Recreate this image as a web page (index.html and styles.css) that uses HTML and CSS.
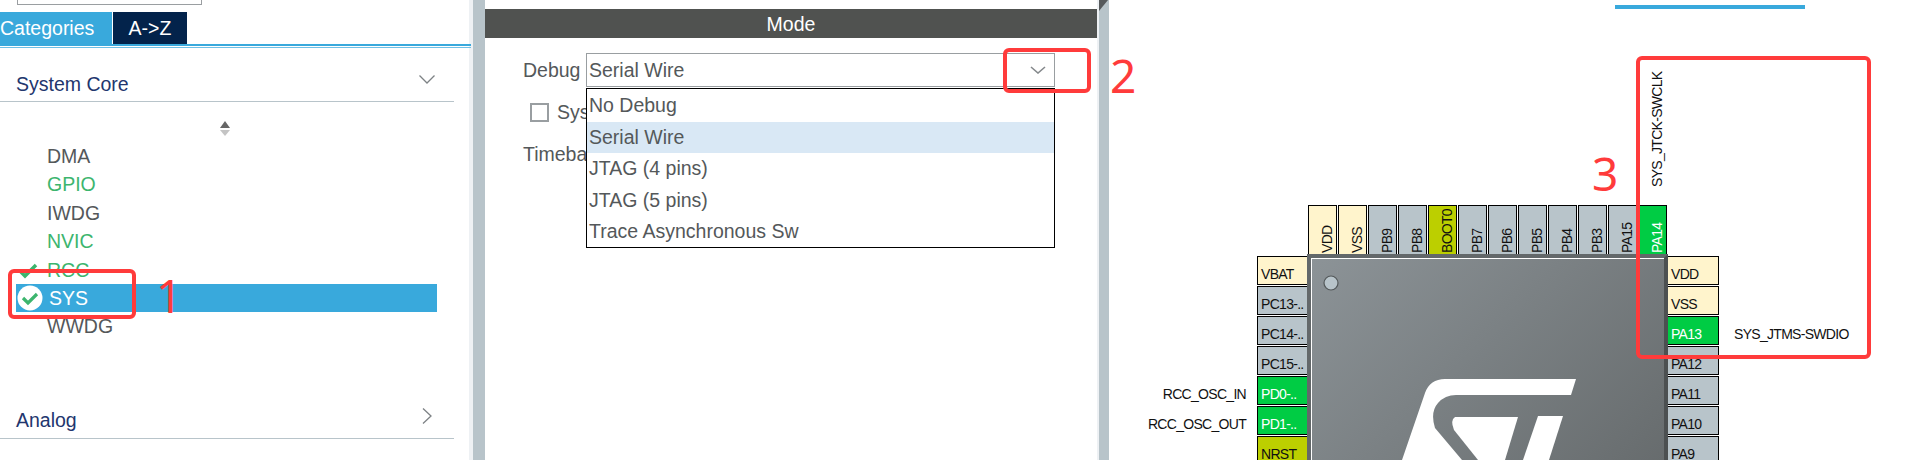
FILE: index.html
```html
<!DOCTYPE html>
<html lang="en">
<head>
<meta charset="utf-8">
<title>Pinout</title>
<link rel="stylesheet" href="styles.css">
</head>
<body>
<div class="app">
  <aside class="side">
    <div class="search"></div>
    <div class="tabs">
      <div class="tab tab-on">Categories</div>
      <div class="tab tab-off">A-&gt;Z</div>
    </div>
    <div class="tab-line"></div>
    <div class="group group-first">
      <span>System Core</span>
      <svg class="chev-down" width="16" height="9" viewBox="0 0 16 9"><polyline points="0.5,0.5 8,8 15.5,0.5" fill="none" stroke="#7d8285" stroke-width="1.3"/></svg>
    </div>
    <svg class="sort" width="12" height="16" viewBox="0 0 12 16"><polygon points="6,0 11,7 1,7" fill="#666"/><polygon points="1,9 11,9 6,15" fill="#c4c4c4"/></svg>
    <ul class="list">
      <li>DMA</li>
      <li class="ok">GPIO</li>
      <li>IWDG</li>
      <li class="ok">NVIC</li>
      <li class="ok">
        <svg class="tick" width="20" height="16" viewBox="0 0 20 16"><polyline points="2,8 7,13 18,2" fill="none" stroke="#3cb56e" stroke-width="3.5"/></svg>
        RCC
      </li>
      <li class="sel">
        <svg class="tick-round" width="26" height="26" viewBox="0 0 26 26"><circle cx="13" cy="13" r="12.5" fill="#fff"/><polyline points="6,13 11,18 20,9" fill="none" stroke="#3cb56e" stroke-width="3.2"/></svg>
        SYS
      </li>
      <li>WWDG</li>
    </ul>
    <div class="group group-next">
      <span>Analog</span>
      <svg class="chev-right" width="10" height="16" viewBox="0 0 10 16"><polyline points="1,0.5 9,8 1,15.5" fill="none" stroke="#7d8285" stroke-width="1.3"/></svg>
    </div>
  </aside>
  <div class="strip"></div>

  <section class="mode">
    <h2 class="mode-title">Mode</h2>
    <div class="row row-debug">
      <label class="label-debug">Debug</label>
      <div class="select">
        <span>Serial Wire</span>
        <svg class="chev-select" width="16" height="8" viewBox="0 0 16 8"><polyline points="1,1 8,7 15,1" fill="none" stroke="#85898c" stroke-width="1.6"/></svg>
        <ul class="menu">
          <li>No Debug</li>
          <li class="menu-on">Serial Wire</li>
          <li>JTAG (4 pins)</li>
          <li>JTAG (5 pins)</li>
          <li>Trace Asynchronous Sw</li>
        </ul>
      </div>
    </div>
    <div class="row row-check"><span class="check"></span><span>Sys</span></div>
    <div class="row row-time"><span>Timeba</span></div>
  </section>
  <div class="hair"></div>
  <div class="strip strip-corner">
    <svg class="corner" width="10" height="11" viewBox="0 0 10 11"><polygon points="0,0 9,0 0,11" fill="#565a5c"/></svg>
  </div>

  <section class="view">
    <div class="view-tab"></div>
    <div class="package">
      <div class="pins-top">
        <div class="pin v pw">VDD</div>
        <div class="pin v pw">VSS</div>
        <div class="pin v pg">PB9</div>
        <div class="pin v pg">PB8</div>
        <div class="pin v po">BOOT0</div>
        <div class="pin v pg">PB7</div>
        <div class="pin v pg">PB6</div>
        <div class="pin v pg">PB5</div>
        <div class="pin v pg">PB4</div>
        <div class="pin v pg">PB3</div>
        <div class="pin v pg">PA15</div>
        <div class="pin v pn">PA14<span class="sig sig-v">SYS_JTCK-SWCLK</span></div>
      </div>
      <div class="pins-left">
        <div class="pin h pw">VBAT</div>
        <div class="pin h pg">PC13-..</div>
        <div class="pin h pg">PC14-..</div>
        <div class="pin h pg">PC15-..</div>
        <div class="pin h pn">PD0-..<span class="sig sig-l">RCC_OSC_IN</span></div>
        <div class="pin h pn">PD1-..<span class="sig sig-l">RCC_OSC_OUT</span></div>
        <div class="pin h po">NRST</div>
      </div>
      <div class="chip">
        <svg class="chip-art" width="353" height="400" viewBox="1311 258 353 400">
          <circle cx="1331" cy="283" r="7" fill="#b8c4ca" stroke="#53585a" stroke-width="1.2"/>
          <path d="M1402 460 L1425 393 Q1430 379 1445 379 L1576 379 L1571 395 L1456 395 Q1445 395 1438 403 Q1430 412 1435 428 L1462 460 Z" fill="#fff"/>
          <path d="M1455 417 L1518 417 L1505 460 L1478 460 L1454 430 Q1450 420 1455 417 Z" fill="#fff"/>
          <path d="M1538 416 L1563 416 L1549 460 L1523 460 Z" fill="#fff"/>
        </svg>
      </div>
      <div class="pins-right">
        <div class="pin h pw">VDD</div>
        <div class="pin h pw">VSS</div>
        <div class="pin h pn">PA13<span class="sig sig-r">SYS_JTMS-SWDIO</span></div>
        <div class="pin h pg">PA12</div>
        <div class="pin h pg">PA11</div>
        <div class="pin h pg">PA10</div>
        <div class="pin h pg">PA9</div>
      </div>
    </div>
  </section>

  <div class="mark mark-1"></div>
  <div class="mark mark-2"></div>
  <div class="mark mark-3"></div>
  <div class="num num-1">1</div>
  <div class="num num-2">2</div>
  <div class="num num-3">3</div>
</div>
</body>
</html>
```
FILE: styles.css
```css
* { box-sizing: border-box; }
html, body { margin: 0; padding: 0; background: #fff; }
.app {
  position: relative;
  display: flex;
  width: 1928px;
  height: 460px;
  overflow: hidden;
  font-family: "Liberation Sans", Arial, sans-serif;
  font-size: 19.5px;
  color: #54585a;
}

/* left tree */
.side {
  width: 473px;
  flex: none;
  border-right: 4px solid #eef1f4;
}
.search {
  width: 185px;
  height: 5px;
  margin-left: 17px;
  border: 1px solid #9a9ea1;
  border-top: 0;
}
.tabs { display: flex; gap: 1px; margin-top: 7px; height: 32px; }
.tab { display: flex; align-items: center; color: #fff; }
.tab-on { width: 112px; background: #39a9dc; }
.tab-off { width: 74px; background: #03234b; justify-content: center; }
.tab-line {
  width: 471px;
  height: 4px;
  border-top: 2px solid #39a9dc;
  border-bottom: 1px solid #6fc0e6;
}
.group {
  width: 454px;
  display: flex;
  align-items: flex-end;
  justify-content: space-between;
  border-bottom: 1px solid #b8c4ca;
  color: #22366e;
}
.group-first { height: 54px; padding: 0 19px 5px 16px; }
.group-next { height: 98px; padding: 0 22px 6px 16px; }
.chev-down { margin-bottom: 12px; }
.chev-right { margin-bottom: 8px; }
.sort { display: block; margin: 19px 0 0 219px; }
.list {
  list-style: none;
  margin: 5px 0 0 16px;
  padding: 0;
  width: 421px;
}
.list li {
  position: relative;
  height: 28.4px;
  line-height: 28px;
  padding-left: 31px;
}
.list .ok { color: #3cb56e; }
.list .sel { background: #39a9dc; color: #fff; padding-left: 33px; }
.tick { position: absolute; left: 2px; top: 7px; }
.tick-round { position: absolute; left: 1px; top: 1px; }

.strip { width: 12px; flex: none; background: #b8c4ca; }
.strip-corner { width: 10px; }
.corner { display: block; }
.hair { width: 2px; flex: none; background: #eef1f4; }

/* mode panel */
.mode { width: 612px; flex: none; padding-top: 9px; }
.mode-title {
  margin: 0;
  height: 29px;
  line-height: 31px;
  background: #505250;
  color: #fff;
  font-size: 19.5px;
  font-weight: 400;
  text-align: center;
}
.row { display: flex; align-items: center; }
.row-debug { margin-top: 15px; padding-left: 38px; height: 34px; }
.label-debug { width: 63px; }
.select {
  position: relative;
  z-index: 2;
  width: 469px;
  height: 34px;
  display: flex;
  align-items: center;
  justify-content: space-between;
  padding: 0 8px 0 2px;
  border: 1px solid #999ea1;
}
.menu {
  position: absolute;
  left: -1px;
  top: 34px;
  width: 469px;
  height: 160px;
  margin: 0;
  padding: 1px 0 0;
  list-style: none;
  background: #fff;
  border: 1px solid #000;
}
.menu li { height: 31.5px; line-height: 31px; padding-left: 2px; }
.menu .menu-on { background: #d9e8f5; }
.row-check { margin-top: 15px; padding-left: 45px; gap: 8px; height: 20px; }
.check {
  width: 19px;
  height: 19px;
  border: 2px solid #999ea1;
  background: #fff;
}
.row-time { margin-top: 21px; padding-left: 38px; height: 22px; }

/* pinout */
.view { flex: 1; min-width: 0; padding-top: 5px; }
.view-tab { width: 190px; height: 4px; margin-left: 506px; background: #39a9dc; }
.package {
  display: grid;
  grid-template-columns: 50px 361px 51px;
  grid-template-rows: 49px auto;
  width: 462px;
  margin: 196px 0 0 148px;
  font-size: 14px;
  letter-spacing: -0.7px;
}
.pins-top { grid-column: 2; grid-row: 1; display: flex; gap: 1px; padding-left: 1px; }
.pins-left { grid-column: 1; grid-row: 2; display: flex; flex-direction: column; gap: 1px; padding-top: 2px; }
.pins-right { grid-column: 3; grid-row: 2; display: flex; flex-direction: column; gap: 1px; padding-top: 2px; }
.pin { position: relative; border: 1px solid #000; color: #111; white-space: nowrap; }
.h {
  height: 29px;
  display: flex;
  align-items: flex-end;
  padding: 0 0 2px 3px;
  border-right: 0;
}
.pins-right .h { border-left: 0; border-right: 1px solid #000; }
.v {
  width: 29px;
  height: 49px;
  padding: 1px 11px 0 0;
  border-top: 0;
  writing-mode: vertical-rl;
  transform: rotate(180deg);
  line-height: 15px;
  text-align: left;
}
.pw { background: #fff4cc; }
.pg { background: #b8c4ca; }
.po { background: #bccf00; }
.pn { background: #00cc44; color: #fff; }
.sig { position: absolute; color: #111; }
.sig-l { right: 61px; bottom: 2px; }
.sig-r { left: 66px; bottom: 2px; }
.sig-v { right: 11px; top: 67px; }
.chip {
  grid-column: 2;
  grid-row: 2;
  height: 408px;
  border: 4px solid #63686a;
  border-right-color: #4c5051;
  box-shadow: inset 1px 1px 0 #fff;
  background: linear-gradient(135deg, #8c9397 0%, #5a5e5f 100%);
}
.chip-art { display: block; }

/* red notes */
.mark { position: absolute; border: 4px solid #ff3b3b; border-radius: 6px; z-index: 5; }
.mark-1 { left: 8px; top: 269px; width: 128px; height: 50px; }
.mark-2 { left: 1003px; top: 48px; width: 88px; height: 45px; }
.mark-3 { left: 1636px; top: 56px; width: 235px; height: 303px; }
.num {
  position: absolute;
  z-index: 5;
  color: #ff3b3b;
  font-family: "Noto Sans", sans-serif;
  font-size: 46px;
  line-height: 46px;
}
.num-1 { left: 156px; top: 272px; }
.num-2 { left: 1110px; top: 52px; }
.num-3 { left: 1592px; top: 150px; }
```
